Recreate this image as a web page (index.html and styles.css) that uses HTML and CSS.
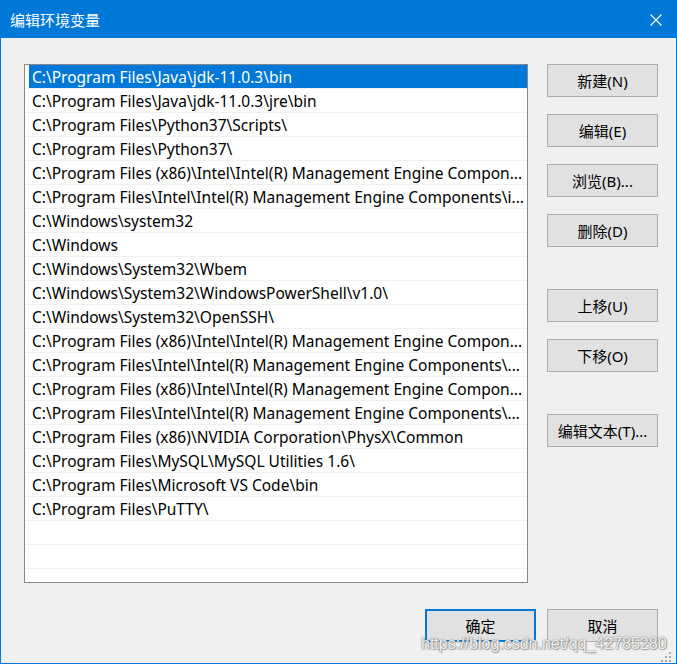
FILE: index.html
```html
<!DOCTYPE html>
<html lang="zh-CN">
<head>
<meta charset="utf-8">
<title>编辑环境变量</title>
<link rel="stylesheet" href="styles.css">
</head>
<body>
<div class="window">
  <div class="titlebar">
    <span class="title">编辑环境变量</span>
    <svg class="close" width="12" height="12" viewBox="0 0 12 12"><path d="M0.5 0.5 L11.5 11.5 M11.5 0.5 L0.5 11.5" stroke="#fff" stroke-width="1.1" fill="none"/></svg>
  </div>
  <div class="content">
    <div class="main">
      <div class="listbox">
        <div class="row"><div class="cell selected">C:\Program Files\Java\jdk-11.0.3\bin</div></div>
        <div class="row"><div class="cell">C:\Program Files\Java\jdk-11.0.3\jre\bin</div></div>
        <div class="row"><div class="cell">C:\Program Files\Python37\Scripts\</div></div>
        <div class="row"><div class="cell">C:\Program Files\Python37\</div></div>
        <div class="row"><div class="cell">C:\Program Files (x86)\Intel\Intel(R) Management Engine Compon...</div></div>
        <div class="row"><div class="cell">C:\Program Files\Intel\Intel(R) Management Engine Components\i...</div></div>
        <div class="row"><div class="cell">C:\Windows\system32</div></div>
        <div class="row"><div class="cell">C:\Windows</div></div>
        <div class="row"><div class="cell">C:\Windows\System32\Wbem</div></div>
        <div class="row"><div class="cell">C:\Windows\System32\WindowsPowerShell\v1.0\</div></div>
        <div class="row"><div class="cell">C:\Windows\System32\OpenSSH\</div></div>
        <div class="row"><div class="cell">C:\Program Files (x86)\Intel\Intel(R) Management Engine Compon...</div></div>
        <div class="row"><div class="cell">C:\Program Files\Intel\Intel(R) Management Engine Components\...</div></div>
        <div class="row"><div class="cell">C:\Program Files (x86)\Intel\Intel(R) Management Engine Compon...</div></div>
        <div class="row"><div class="cell">C:\Program Files\Intel\Intel(R) Management Engine Components\I...</div></div>
        <div class="row"><div class="cell">C:\Program Files (x86)\NVIDIA Corporation\PhysX\Common</div></div>
        <div class="row"><div class="cell">C:\Program Files\MySQL\MySQL Utilities 1.6\</div></div>
        <div class="row"><div class="cell">C:\Program Files\Microsoft VS Code\bin</div></div>
        <div class="row"><div class="cell">C:\Program Files\PuTTY\</div></div>
        <div class="row"><div class="cell"></div></div>
        <div class="row"><div class="cell"></div></div>
      </div>
      <div class="side">
        <div class="group">
          <button class="btn">新建(N)</button>
          <button class="btn">编辑(E)</button>
          <button class="btn">浏览(B)...</button>
          <button class="btn">删除(D)</button>
        </div>
        <div class="group">
          <button class="btn">上移(U)</button>
          <button class="btn">下移(O)</button>
        </div>
        <div class="group">
          <button class="btn">编辑文本(T)...</button>
        </div>
      </div>
    </div>
    <div class="footer">
      <button class="btn default">确定</button>
      <button class="btn">取消</button>
    </div>
  </div>
  <div class="watermark">https://blog.csdn.net/qq_42785280</div>
  <svg class="grip" width="14" height="10" viewBox="0 0 14 10">
    <rect x="10" y="0" width="2" height="2" fill="#a8a8a8"/>
    <rect x="6" y="4" width="2" height="2" fill="#a8a8a8"/>
    <rect x="10" y="4" width="2" height="2" fill="#a8a8a8"/>
    <rect x="2" y="8" width="2" height="2" fill="#a8a8a8"/>
    <rect x="6" y="8" width="2" height="2" fill="#a8a8a8"/>
    <rect x="10" y="8" width="2" height="2" fill="#a8a8a8"/>
  </svg>
</div>
</body>
</html>
```

FILE: styles.css
```css
* { box-sizing: border-box; }
html, body {
  margin: 0;
  padding: 0;
  background: #f0f0f0;
}
body {
  font-family: "Noto Sans", "Noto Sans CJK SC", sans-serif;
  font-size: 15px;
  color: #000;
}
.window {
  position: relative;
  width: 677px;
  height: 664px;
  border: 1px solid #0078d7;
  background: #f0f0f0;
  display: flex;
  flex-direction: column;
}
.titlebar {
  height: 37px;
  flex: none;
  background: #0078d7;
  display: flex;
  align-items: center;
  justify-content: space-between;
  padding: 0 14px 0 9px;
}
.title {
  color: #fff;
  font-family: "Noto Sans CJK SC", sans-serif;
  font-size: 15px;
  line-height: 20px;
}
.close { display: block; }
.content {
  flex: 1;
  display: flex;
  flex-direction: column;
  padding: 26px 18px 0 23px;
}
.main {
  display: flex;
  gap: 19px;
}
.listbox {
  width: 504px;
  height: 519px;
  border: 1px solid #828790;
  background: #fff;
  overflow: hidden;
}
.row {
  height: 24px;
  margin-left: 1px;
  border-bottom: 1px solid #f0f0f0;
  padding-left: 3px;
}
.cell {
  height: 23px;
  line-height: 25px;
  padding: 0 2px 0 3px;
  font-size: 15.5px;
  white-space: nowrap;
  overflow: hidden;
  text-overflow: ellipsis;
}
.cell.selected {
  background: #0078d7;
  color: #fff;
}
.side {
  display: flex;
  flex-direction: column;
  gap: 42px;
}
.group {
  display: flex;
  flex-direction: column;
  gap: 17px;
}
.btn {
  width: 111px;
  height: 33px;
  margin: 0;
  padding: 0;
  background: #e1e1e1;
  border: 1px solid #adadad;
  border-radius: 0;
  font-family: "Noto Sans", "Noto Sans CJK SC", sans-serif;
  font-size: 15px;
  color: #000;
  line-height: 20px;
}
.btn.default {
  border: 2px solid #0078d7;
}
.footer {
  display: flex;
  justify-content: flex-end;
  gap: 11px;
  margin-top: 26px;
}
.watermark {
  position: absolute;
  left: 420px;
  top: 634px;
  font-family: "Liberation Sans", Arial, sans-serif;
  font-size: 16px;
  color: rgba(255, 255, 255, 0.9);
  text-shadow: 0 0 1px #777, 0 0 2px #999, 1px 1px 1px #aaa;
  white-space: nowrap;
}
.grip {
  position: absolute;
  right: 3px;
  bottom: 1px;
}
```
